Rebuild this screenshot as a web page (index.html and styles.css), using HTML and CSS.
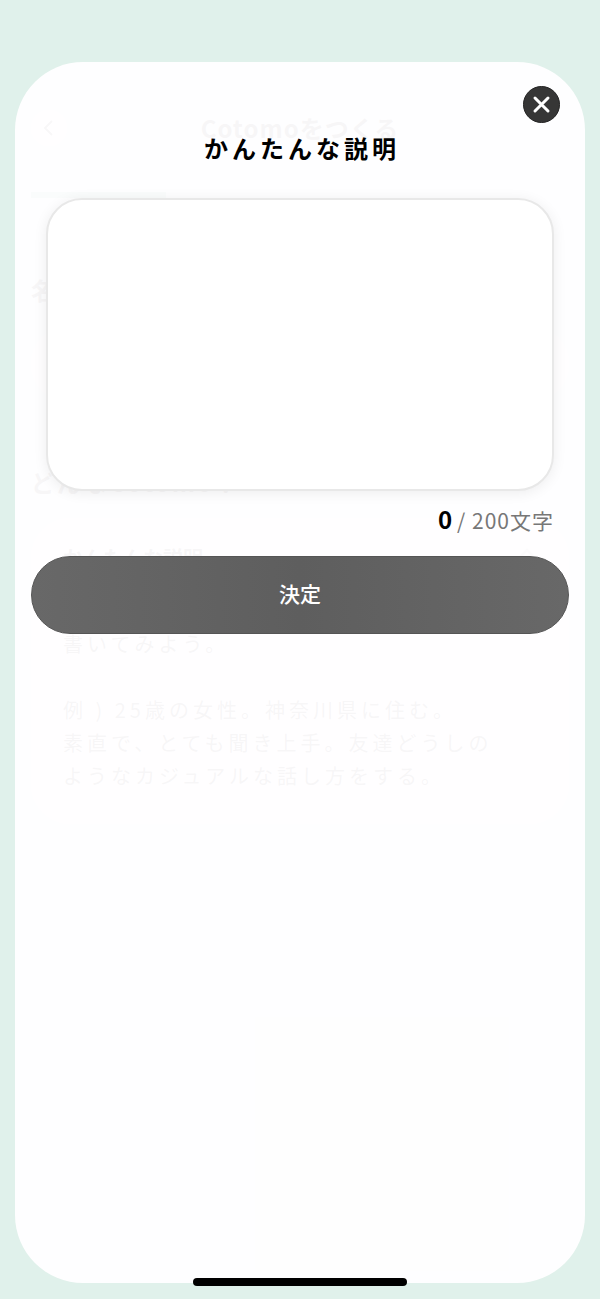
FILE: index.html
```html
<!DOCTYPE html>
<html lang="ja">
<head>
    <meta charset="UTF-8">
    <meta name="viewport" content="width=device-width, initial-scale=1.0">
    <title>かんたんな説明</title>
    <link rel="stylesheet" href="styles.css">
</head>
<body>
    <div class="screen">
        <!-- page under the modal -->
        <div class="page" aria-hidden="true">
            <header class="page-header">
                <span class="back">
                    <svg width="14" height="20" viewBox="0 0 14 20"><path d="M10 3L3 10l7 7" fill="none" stroke="#333" stroke-width="2"/></svg>
                </span>
                <h1>Cotomoをつくる</h1>
            </header>
            <div class="progress"></div>
            <h2 class="label">名前</h2>
            <div class="name-box"></div>
            <h2 class="label">どんなCotomo？</h2>
            <div class="card">
                <div class="card-title">
                    <h3>かんたんな説明</h3>
                    <svg width="24" height="24" viewBox="0 0 24 24"><path d="M4 14L14 4l6 6M8 18l8-8" fill="none" stroke="#aaa" stroke-width="3"/></svg>
                </div>
                <p>性別や年齢、性格などを自由に<br>書いてみよう。</p>
                <p>例 ) 25歳の女性。神奈川県に住む。<br>素直で、とても聞き上手。友達どうしの<br>ようなカジュアルな話し方をする。</p>
            </div>
        </div>

        <!-- modal -->
        <form class="modal" role="dialog" aria-labelledby="modal-title" onsubmit="return false">
            <button type="button" class="close" aria-label="閉じる">
                <svg width="35" height="35" viewBox="0 0 35 35"><path d="M11 11l13 13M24 11L11 24" fill="none" stroke="#fff" stroke-width="3" stroke-linecap="round"/></svg>
            </button>
            <label class="modal-title" id="modal-title" for="description">かんたんな説明</label>
            <textarea id="description" maxlength="200" oninput="updateCount()"></textarea>
            <p class="counter"><strong id="count">0</strong>/ 200文字</p>
            <button type="submit" class="submit">決定</button>
        </form>

        <div class="home-bar"></div>
    </div>

    <script>
        function updateCount() {
            document.getElementById("count").textContent = document.getElementById("description").value.length;
        }
    </script>
</body>
</html>
```
FILE: styles.css
```css
* {
    box-sizing: border-box;
}
body {
    margin: 0;
    background-color: #e0f1eb;
    color: #000;
    font-family: "Noto Sans CJK JP", "Noto Sans", sans-serif;
}
h1, h2, h3, p {
    margin: 0;
}
.screen {
    position: relative;
    display: grid;
    min-height: 100vh;
}
.page, .modal {
    grid-area: 1 / 1;
}

/* page under the modal */
.page {
    padding: 108px 31px 16px;
}
.page-header {
    display: grid;
    grid-template-columns: 36px 1fr 36px;
    align-items: center;
    margin-bottom: 44px;
}
.back {
    display: flex;
    align-items: center;
    justify-content: center;
    height: 36px;
    border-radius: 50%;
    background: white;
}
.page-header h1 {
    font-size: 24px;
    line-height: 40px;
    letter-spacing: 1px;
    text-align: center;
}
.progress {
    width: 25%;
    height: 6px;
    margin-bottom: 72px;
    background: #6fb9a0;
}
.label {
    font-size: 24px;
    line-height: 40px;
    letter-spacing: 2px;
}
.name-box {
    height: 76px;
    margin: 16px 0 60px;
    border-radius: 38px;
    background: white;
}
.card {
    margin-top: 16px;
    padding: 24px 32px 32px;
    border-radius: 40px;
    background: white;
}
.card-title {
    display: flex;
    align-items: center;
    justify-content: space-between;
    margin-bottom: 20px;
}
.card h3 {
    font-size: 20px;
    line-height: 32px;
}
.card p {
    margin-bottom: 33px;
    font-size: 20px;
    line-height: 33px;
    letter-spacing: 4px;
}
.card p:last-child {
    margin-bottom: 0;
}

/* modal */
.modal {
    position: relative;
    display: flex;
    flex-direction: column;
    margin: 62px 15px 16px;
    padding: 68px 16px 16px;
    border-radius: 68px;
    background: rgba(255, 254, 255, 0.97);
}
.close {
    position: absolute;
    top: 24px;
    right: 25px;
    width: 37px;
    height: 37px;
    padding: 0;
    border: 1px solid #222;
    border-radius: 50%;
    background: #363636;
    cursor: pointer;
}
.close svg {
    display: block;
}
.modal-title {
    padding-left: 4px;
    font-size: 24px;
    font-weight: bold;
    line-height: 36px;
    letter-spacing: 4px;
    text-align: center;
}
textarea {
    height: 293px;
    margin: 32px 15px 0;
    padding: 24px;
    border: 2px solid #e8e8e8;
    border-radius: 36px;
    outline: none;
    background: white;
    box-shadow: 0 2px 14px rgba(0, 0, 0, 0.07);
    font: inherit;
    font-size: 20px;
    resize: none;
}
.counter {
    margin: 12px 15px 20px;
    color: #777;
    font-size: 21px;
    line-height: 32px;
    letter-spacing: 1px;
    text-align: right;
}
.counter strong {
    margin-right: 4px;
    color: black;
    font-size: 24px;
}
.submit {
    height: 78px;
    padding: 0 0 4px;
    border: 1px solid #555;
    border-radius: 39px;
    background: linear-gradient(90deg, #686868, #5e5e5e 50%, #686868);
    color: white;
    font: inherit;
    font-size: 21px;
    font-weight: 500;
    cursor: pointer;
}

.home-bar {
    position: absolute;
    bottom: 13px;
    left: 50%;
    width: 214px;
    height: 8px;
    margin-left: -107px;
    border-radius: 4px;
    background: black;
}
```
